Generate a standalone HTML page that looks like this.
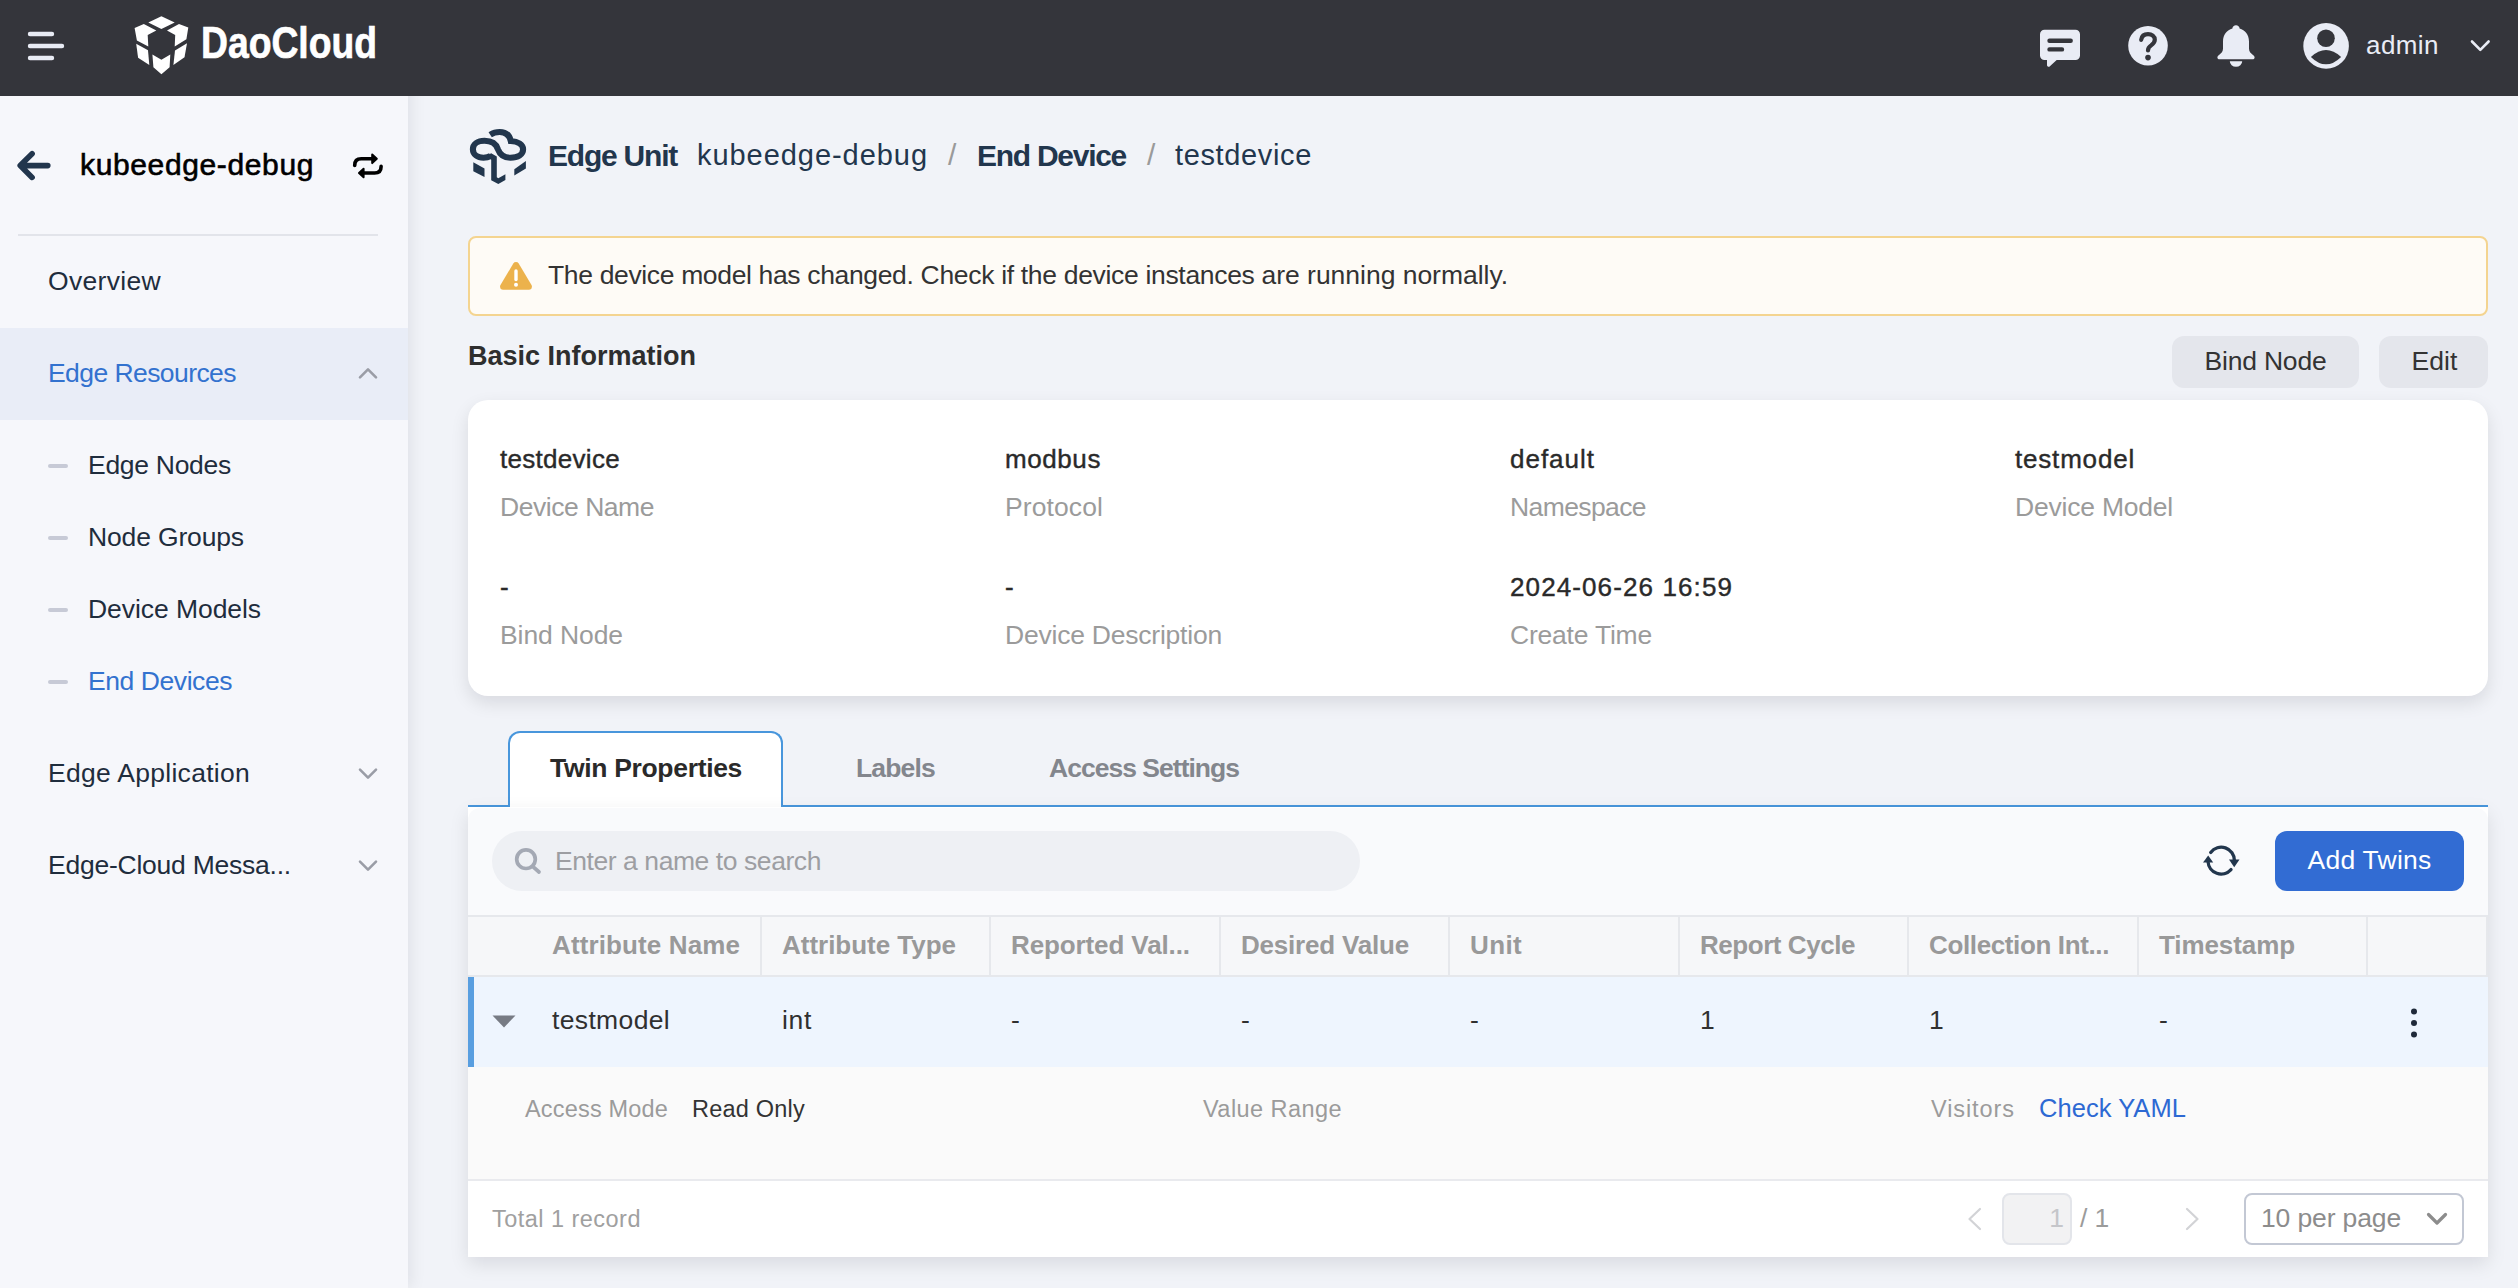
<!DOCTYPE html>
<html lang="en"><head><meta charset="utf-8"><title>End Device - testdevice</title>
<style>
*{box-sizing:border-box;margin:0;padding:0}
html,body{width:2518px;height:1288px}
body{overflow:hidden}
body{background:#f1f3f8;font-family:"Liberation Sans",sans-serif;color:#333;position:relative}
.t{position:absolute;white-space:pre;line-height:1;display:block;color:inherit;margin:0;padding:0;border:0;background:none;font-family:inherit;font-weight:400;text-decoration:none;text-align:left;cursor:default}
.abs{position:absolute}
header{position:absolute;left:0;top:0;width:2518px;height:96px;background:#34353b}
aside{position:absolute;left:0;top:0;width:408px;height:1288px;background:#f6f7fb;box-shadow:4px 0 14px rgba(20,20,30,.07)}
main{position:absolute;left:0;top:0;width:2518px;height:1288px}
svg{position:absolute;overflow:visible}
.btn{position:absolute;border-radius:12px;background:#e4e6ec}
.card{position:absolute;left:468px;top:400px;width:2020px;height:296px;background:#fff;border-radius:20px;box-shadow:0 7px 18px rgba(10,10,20,.105)}
.alert{position:absolute;left:468px;top:236px;width:2020px;height:80px;border:2px solid #f4d490;background:#fefbf6;border-radius:8px}
.panel{position:absolute;left:468px;top:807px;width:2020px;height:450px;background:#fff;box-shadow:0 7px 18px rgba(10,10,20,.10)}
.toolbar{position:absolute;left:468px;top:808px;width:2020px;height:108px;background:#f9fafc;border-radius:12px 12px 0 0}
.tabline{position:absolute;left:468px;top:805px;width:2020px;height:2px;background:#4896dc}
.tab{position:absolute;left:508px;top:731px;width:275px;height:76px;background:#fff;border:2px solid #4896dc;border-bottom:none;border-radius:12px 12px 0 0}
.search{position:absolute;left:492px;top:831px;width:868px;height:60px;border-radius:30px;background:#eef0f4}
.thead{position:absolute;left:468px;top:915px;width:2020px;height:62px;background:#f6f7f9;border-top:2px solid #e6e8ec;border-bottom:2px solid #e6e8ec}
.colsep{position:absolute;top:917px;width:2px;height:58px;background:#e6e8ec}
.row{position:absolute;left:468px;top:977px;width:2020px;height:90px;background:#eef5fe}
.rowbar{position:absolute;left:468px;top:977px;width:6px;height:90px;background:#589ee0}
.expand{position:absolute;left:468px;top:1067px;width:2020px;height:112px;background:#fafafa}
.foot{position:absolute;left:468px;top:1179px;width:2020px;height:78px;background:#fff;border-top:2px solid #e9eaee}
.pginput{position:absolute;left:2002px;top:1193px;width:70px;height:52px;border:2px solid #e3e5ea;border-radius:8px;background:#f2f2f3}
.pgsel{position:absolute;left:2244px;top:1193px;width:220px;height:52px;border:2px solid #c3c8d4;border-radius:8px;background:#fff}
.active{position:absolute;left:0;top:328px;width:408px;height:92px;background:#e9edf7}
.dash{position:absolute;left:48px;width:20px;height:4px;border-radius:2px;background:#c7cad6}
.divider{position:absolute;left:18px;top:234px;width:360px;height:2px;background:#e2e4ea}
</style></head>
<body>
<main>
<svg style="left:466px;top:126px" width="64" height="62" viewBox="466 126 64 62"><g fill="none" stroke="#22364d" stroke-width="6.100">
<path d="M490.200 134.700C493 132.900 496 132 499.700 132C505.500 132 509.500 135.400 510.800 141C518 141.500 523.100 144.500 523.100 149.300C523.100 154.500 518 157.700 510.500 157.700C503.500 157.700 499.600 154 497.800 149C496 143.600 491.500 140.800 484.500 140.800C477.500 140.800 472.900 144.300 472.900 149.300C472.900 154.500 477.500 157.700 483.500 157.700C486.400 157.700 488.600 157.100 490.600 156"/>
</g><g fill="#22364d"><polygon points="487.500,155.200 491.200,153.200 496.800,156.500 496.800,177.300 498.300,178.200 505.400,174.300 505.400,180.100 498.300,184.100 491.200,180.300 491.200,159.800"/><polygon points="473.300,162.300 484.500,168.600 484.500,176.900 473.300,171.200"/><polygon points="525.900,161 525.900,168.600 514.300,175.600 514.300,169.300"/></g></svg>
<strong class="t" style="top:141px;font-size:30px;left:548.0px;font-weight:700;color:#22364d;letter-spacing:-1.22px;">Edge Unit</strong><span class="t" style="top:141px;font-size:29px;left:697.0px;color:#22364d;letter-spacing:0.95px;">kubeedge-debug</span><span class="t" style="top:140px;font-size:30px;left:948.0px;color:#9a9a9a;">/</span><strong class="t" style="top:141px;font-size:30px;left:977.0px;font-weight:700;color:#22364d;letter-spacing:-1.27px;">End Device</strong><span class="t" style="top:140px;font-size:30px;left:1147.0px;color:#9a9a9a;">/</span><span class="t" style="top:141px;font-size:29px;left:1175.0px;color:#22364d;letter-spacing:0.64px;">testdevice</span>
<div class="alert"></div>
<svg style="left:498px;top:260px" width="36" height="32" viewBox="498 260 36 32"><path fill="#ecb24c" d="M513.300 263.600a3.200 3.200 0 0 1 5.400 0l12.800 21.400a3.200 3.200 0 0 1 -2.700 4.800h-25.600a3.200 3.200 0 0 1 -2.700 -4.800z"/><path d="M516 271v8.500" stroke="#fff" stroke-width="3.400" stroke-linecap="round"/><circle cx="516" cy="284.800" r="2" fill="#fff"/></svg>
<p class="abs" style="left:0;top:0"><span class="t" style="top:262px;font-size:26.5px;left:548.0px;letter-spacing:-0.35px;">The device model has changed. </span><span class="t" style="top:262px;font-size:26.5px;left:920.6px;letter-spacing:-0.32px;">Check if the device instances </span><span class="t" style="top:262px;font-size:26.5px;left:1261.5px;letter-spacing:-0.02px;">are running normally.</span></p>
<h2 class="t" style="top:343px;font-size:27px;left:468.0px;font-weight:700;color:#2e2e2e;">Basic Information</h2>
<div class="btn" style="left:2172px;top:336px;width:187px;height:52px"></div><button class="t" style="top:348px;font-size:26.5px;left:2204.5px;letter-spacing:-0.20px;">Bind Node</button>
<div class="btn" style="left:2379px;top:336px;width:109px;height:52px"></div><button class="t" style="top:348px;font-size:26.5px;left:2411.5px;letter-spacing:0.08px;">Edit</button>
<section class="card"></section>
<span class="t" style="top:446px;font-size:26px;left:500.0px;color:#2a2a2a;letter-spacing:0.29px;-webkit-text-stroke:0.4px currentColor;">testdevice</span><span class="t" style="top:446px;font-size:26px;left:1005.0px;color:#2a2a2a;letter-spacing:0.58px;-webkit-text-stroke:0.4px currentColor;">modbus</span><span class="t" style="top:446px;font-size:26px;left:1510.0px;color:#2a2a2a;letter-spacing:0.99px;-webkit-text-stroke:0.4px currentColor;">default</span><span class="t" style="top:446px;font-size:26px;left:2015.0px;color:#2a2a2a;letter-spacing:0.81px;-webkit-text-stroke:0.4px currentColor;">testmodel</span>
<span class="t" style="top:494px;font-size:26.5px;left:500.0px;color:#9b9b9b;letter-spacing:-0.46px;">Device Name</span><span class="t" style="top:494px;font-size:26.5px;left:1005.0px;color:#9b9b9b;letter-spacing:0.10px;">Protocol</span><span class="t" style="top:494px;font-size:26.5px;left:1510.0px;color:#9b9b9b;letter-spacing:-0.60px;">Namespace</span><span class="t" style="top:494px;font-size:26.5px;left:2015.0px;color:#9b9b9b;letter-spacing:-0.21px;">Device Model</span>
<span class="t" style="top:574px;font-size:26px;left:500.0px;color:#2a2a2a;-webkit-text-stroke:0.4px currentColor;">-</span><span class="t" style="top:574px;font-size:26px;left:1005.0px;color:#2a2a2a;-webkit-text-stroke:0.4px currentColor;">-</span><span class="t" style="top:574px;font-size:26px;left:1510.0px;color:#2a2a2a;letter-spacing:1.11px;-webkit-text-stroke:0.4px currentColor;">2024-06-26 16:59</span>
<span class="t" style="top:622px;font-size:26.5px;left:500.0px;color:#9b9b9b;letter-spacing:-0.09px;">Bind Node</span><span class="t" style="top:622px;font-size:26.5px;left:1005.0px;color:#9b9b9b;letter-spacing:-0.22px;">Device Description</span><span class="t" style="top:622px;font-size:26.5px;left:1510.0px;color:#9b9b9b;letter-spacing:-0.21px;">Create Time</span>
<div class="tabline"></div><div class="tab"></div>
<span class="t" style="top:755px;font-size:26.5px;left:550.0px;font-weight:700;color:#2a2a2a;letter-spacing:-0.32px;">Twin Properties</span><span class="t" style="top:755px;font-size:26.5px;left:856.0px;font-weight:700;color:#83868d;letter-spacing:-0.83px;">Labels</span><span class="t" style="top:755px;font-size:26.5px;left:1049.0px;font-weight:700;color:#83868d;letter-spacing:-0.98px;">Access Settings</span>
<section class="panel"></section><div class="toolbar"></div>
<div class="search"></div>
<svg style="left:512px;top:846px" width="32" height="32" viewBox="512 846 32 32"><g fill="none" stroke="#a4a9b4" stroke-width="3.700" stroke-linecap="round"><circle cx="526" cy="859.200" r="9.300"/><path d="M533.200 866.800l5.800 5.200"/></g></svg>
<span class="t" style="top:848px;font-size:26.5px;left:555.0px;color:#9d9ea2;letter-spacing:-0.43px;">Enter a name to search</span>
<svg style="left:2200px;top:840px" width="44" height="44" viewBox="2200 840 44 44"><g fill="none" stroke="#22364d" stroke-width="3.300" stroke-linecap="round"><path d="M2210.700 852.400A13.200 13.200 0 0 1 2234.400 860.500"/><path d="M2231 869.600A13.200 13.200 0 0 1 2208 861.500"/></g><g fill="#22364d"><polygon points="2229,859.600 2239.500,859.600 2234.200,867.200"/><polygon points="2203,862.600 2213.200,862.600 2208.200,855.600"/></g></svg>
<div class="btn" style="left:2275px;top:831px;width:189px;height:60px;background:#326cd3"></div><button class="t" style="top:847px;font-size:26.5px;left:2307.5px;color:#fff;letter-spacing:0.25px;">Add Twins</button>
<div class="thead"></div>
<div class="colsep" style="left:760px"></div><div class="colsep" style="left:989px"></div><div class="colsep" style="left:1219px"></div><div class="colsep" style="left:1448px"></div><div class="colsep" style="left:1678px"></div><div class="colsep" style="left:1907px"></div><div class="colsep" style="left:2137px"></div><div class="colsep" style="left:2366px"></div><div class="colsep" style="left:2486px"></div>
<span class="t" style="top:932px;font-size:26px;left:552.0px;font-weight:700;color:#999;letter-spacing:0.12px;">Attribute Name</span><span class="t" style="top:932px;font-size:26px;left:782.0px;font-weight:700;color:#999;letter-spacing:-0.02px;">Attribute Type</span><span class="t" style="top:932px;font-size:26px;left:1011.0px;font-weight:700;color:#999;letter-spacing:-0.11px;">Reported Val...</span><span class="t" style="top:932px;font-size:26px;left:1241.0px;font-weight:700;color:#999;letter-spacing:-0.20px;">Desired Value</span><span class="t" style="top:932px;font-size:26px;left:1470.0px;font-weight:700;color:#999;letter-spacing:0.36px;">Unit</span><span class="t" style="top:932px;font-size:26px;left:1700.0px;font-weight:700;color:#999;letter-spacing:-0.45px;">Report Cycle</span><span class="t" style="top:932px;font-size:26px;left:1929.0px;font-weight:700;color:#999;letter-spacing:-0.37px;">Collection Int...</span><span class="t" style="top:932px;font-size:26px;left:2159.0px;font-weight:700;color:#999;letter-spacing:-0.09px;">Timestamp</span>
<div class="row"></div><div class="rowbar"></div>
<svg style="left:490px;top:1012px" width="28" height="18" viewBox="490 1012 28 18"><polygon points="492.500,1015.500 515.500,1015.500 504,1027.500" fill="#777b84"/></svg>
<span class="t" style="top:1007px;font-size:26.5px;left:552.0px;color:#303030;letter-spacing:0.35px;">testmodel</span><span class="t" style="top:1007px;font-size:26.5px;left:782.0px;color:#303030;letter-spacing:0.67px;">int</span><span class="t" style="top:1007px;font-size:26.5px;left:1011.0px;color:#303030;">-</span><span class="t" style="top:1007px;font-size:26.5px;left:1241.0px;color:#303030;">-</span><span class="t" style="top:1007px;font-size:26.5px;left:1470.0px;color:#303030;">-</span><span class="t" style="top:1007px;font-size:26.5px;left:1700.0px;color:#303030;">1</span><span class="t" style="top:1007px;font-size:26.5px;left:1929.0px;color:#303030;">1</span><span class="t" style="top:1007px;font-size:26.5px;left:2159.0px;color:#303030;">-</span>
<svg style="left:2408px;top:1006px" width="12" height="34" viewBox="2408 1006 12 34"><g fill="#1f2a3a"><circle cx="2414" cy="1011.500" r="3"/><circle cx="2414" cy="1023" r="3"/><circle cx="2414" cy="1034.500" r="3"/></g></svg>
<div class="expand"></div>
<span class="t" style="top:1098px;font-size:23.5px;left:525.0px;color:#9b9b9b;letter-spacing:0.18px;">Access Mode</span><span class="t" style="top:1098px;font-size:23.5px;left:692.0px;letter-spacing:0.22px;">Read Only</span><span class="t" style="top:1098px;font-size:23.5px;left:1203.0px;color:#9b9b9b;letter-spacing:0.44px;">Value Range</span><span class="t" style="top:1098px;font-size:23.5px;left:1931.0px;color:#9b9b9b;letter-spacing:0.92px;">Visitors</span><a class="t" style="top:1096px;font-size:25.5px;left:2039.0px;color:#2d69d3;letter-spacing:0.05px;">Check YAML</a>
<div class="foot"></div>
<span class="t" style="top:1208px;font-size:23.5px;left:492.0px;color:#a0a0a0;letter-spacing:0.47px;">Total 1 record</span>
<svg style="left:1962px;top:1206px" width="24" height="26" viewBox="1962 1206 24 26"><path d="M1980 1209l-10.500 10 10.500 10" fill="none" stroke="#d2d3d6" stroke-width="2.200" stroke-linecap="round" stroke-linejoin="round"/></svg>
<div class="pginput"></div><span class="t" style="top:1205px;font-size:26.5px;right:454.0px;color:#c5c6ca;">1</span><span class="t" style="top:1205px;font-size:26.5px;left:2080.0px;color:#9b9b9b;letter-spacing:-0.16px;">/ 1</span>
<svg style="left:2180px;top:1206px" width="24" height="26" viewBox="2180 1206 24 26"><path d="M2187 1209l10.500 10 -10.500 10" fill="none" stroke="#d2d3d6" stroke-width="2.200" stroke-linecap="round" stroke-linejoin="round"/></svg>
<div class="pgsel"></div><span class="t" style="top:1205px;font-size:26.5px;left:2261.0px;color:#8c8c8c;letter-spacing:-0.13px;">10 per page</span>
<svg style="left:2424px;top:1210px" width="26" height="18" viewBox="2424 1210 26 18"><path d="M2428.500 1214.500l8.500 8.500 8.500 -8.500" fill="none" stroke="#8c8c8c" stroke-width="3.200" stroke-linecap="round" stroke-linejoin="round"/></svg>
</main>
<aside><nav>
<svg style="left:14px;top:146px" width="40" height="40" viewBox="14 146 40 40"><path d="M47.800 165.600H20.500M32.100 153.800l-11.900 11.800 11.900 11.800" fill="none" stroke="#22364d" stroke-width="5.600" stroke-linecap="round" stroke-linejoin="round"/></svg>
<div class="t" style="top:150px;font-size:30px;left:80.0px;color:#000;letter-spacing:0.63px;-webkit-text-stroke:0.6px currentColor;">kubeedge-debug</div>
<svg style="left:350px;top:150px" width="36" height="32" viewBox="350 150 36 32"><g fill="none" stroke="#000" stroke-width="3.600" stroke-linecap="round" stroke-linejoin="round"><path d="M354.700 165.400C354.700 160.600 357 158.800 361.200 158.800H372"/><path d="M381.100 166.400C381.100 171.200 378.800 173 374.600 173H364"/></g><g fill="#000" stroke="#000" stroke-width="2" stroke-linejoin="round"><polygon points="372.200,154.500 376.800,158.800 372.200,163.100"/><polygon points="363.600,168.700 359,173 363.600,177.300"/></g></svg>
<div class="divider"></div>
<a class="t" style="top:268px;font-size:26.5px;left:48.0px;color:#1f2d3d;letter-spacing:0.32px;">Overview</a>
<div class="active"></div>
<a class="t" style="top:360px;font-size:26.5px;left:48.0px;color:#3372cf;letter-spacing:-0.57px;">Edge Resources</a><svg style="left:356px;top:363px" width="24" height="20" viewBox="356 363 24 20"><path d="M360 377.3l8 -8 8 8" fill="none" stroke="#9a9da6" stroke-width="2.600" stroke-linecap="round" stroke-linejoin="round"/></svg>
<div class="dash" style="top:464px"></div><a class="t" style="top:452px;font-size:26.5px;left:88.0px;color:#1f2d3d;letter-spacing:-0.29px;">Edge Nodes</a>
<div class="dash" style="top:536px"></div><a class="t" style="top:524px;font-size:26.5px;left:88.0px;color:#1f2d3d;letter-spacing:-0.15px;">Node Groups</a>
<div class="dash" style="top:608px"></div><a class="t" style="top:596px;font-size:26.5px;left:88.0px;color:#1f2d3d;letter-spacing:-0.06px;">Device Models</a>
<div class="dash" style="top:680px"></div><a class="t" style="top:668px;font-size:26.5px;left:88.0px;color:#3372cf;letter-spacing:-0.43px;">End Devices</a>
<a class="t" style="top:760px;font-size:26.5px;left:48.0px;color:#1f2d3d;letter-spacing:0.29px;">Edge Application</a><svg style="left:356px;top:764px" width="24" height="20" viewBox="356 764 24 20"><path d="M360 769.7l8 8 8 -8" fill="none" stroke="#9a9da6" stroke-width="2.600" stroke-linecap="round" stroke-linejoin="round"/></svg>
<a class="t" style="top:852px;font-size:26.5px;left:48.0px;color:#1f2d3d;letter-spacing:-0.24px;">Edge-Cloud Messa...</a><svg style="left:356px;top:856px" width="24" height="20" viewBox="356 856 24 20"><path d="M360 861.7l8 8 8 -8" fill="none" stroke="#9a9da6" stroke-width="2.600" stroke-linecap="round" stroke-linejoin="round"/></svg>
</nav></aside>
<header>
<svg style="left:26px;top:30px" width="42" height="32" viewBox="26 30 42 32"><g stroke="#e9ecf5" stroke-width="4.4" stroke-linecap="round"><path d="M30 34H52M30 46H62M30 58H52"/></g></svg>
<svg style="left:130px;top:12px" width="64" height="68" viewBox="130 12 64 68"><g fill="#fff">
<polygon points="161.400,16.300 174.700,22.600 161.400,29 148.300,22.600"/>
<polygon points="134.600,27.900 143.800,24.100 156.300,30.500 147.700,34.900 148.300,46.400 136.900,40.400"/>
<polygon points="188.300,27.500 179,24.100 167,30.500 175.200,34.900 174.700,46.400 186.400,39.200"/>
<polygon points="136.200,43.800 148,50.200 149.300,65.100 138.100,57.800"/>
<polygon points="187,43.200 175,50.600 173.400,65.100 184.500,57.200"/>
<polygon points="152.400,54.600 161.400,59.700 170.300,54.600 169.600,67.300 161.400,74.300 153.400,67.300"/>
</g></svg>
<div class="t" style="top:20px;font-size:45px;left:201.0px;font-weight:700;color:#fff;transform:scaleX(0.8283);transform-origin:0 0;-webkit-text-stroke:0.7px currentColor;">DaoCloud</div>
<svg style="left:2036px;top:26px" width="48" height="44" viewBox="2036 26 48 44"><path fill="#e9ecf5" d="M2044.500 29.800h31a4.500 4.500 0 0 1 4.500 4.500v21.300a4.500 4.500 0 0 1 -4.500 4.500h-18.800l-6.800 6.200a1.700 1.700 0 0 1 -2.900 -1.200v-5h-2.500a4.500 4.500 0 0 1 -4.500 -4.500v-21.300a4.500 4.500 0 0 1 4.500 -4.500z"/><path d="M2049.500 40.700H2070.700M2049.500 49.400H2062" stroke="#34353b" stroke-width="4.400" stroke-linecap="round"/></svg>
<svg style="left:2126px;top:24px" width="44" height="44" viewBox="2126 24 44 44"><circle cx="2148" cy="45.700" r="19.800" fill="#e9ecf5"/><path d="M2141.200 39.800c.500 -3.600 3.200 -5.600 6.800 -5.600 3.800 0 6.800 2.200 6.800 5.600 0 2.800 -1.800 4.200 -3.700 5.600 -2 1.400 -3.100 2.600 -3.100 5" fill="none" stroke="#34353b" stroke-width="4.200" stroke-linecap="round"/><circle cx="2148" cy="57.600" r="2.800" fill="#34353b"/></svg>
<svg style="left:2214px;top:22px" width="44" height="48" viewBox="2214 22 44 48"><path fill="#e9ecf5" d="M2236 25.300C2238 25.300 2239.400 26.600 2239.600 28.400C2245 30 2249 34.600 2249 41.500V48.500C2249 51.500 2250.500 53 2253 55C2254.500 56.200 2254.600 57 2254.600 57.400C2254.600 58.500 2253.800 59.200 2252.600 59.200H2219.400C2218.200 59.200 2217.400 58.500 2217.400 57.400C2217.400 57 2217.500 56.200 2219 55C2221.500 53 2223 51.500 2223 48.500V41.500C2223 34.600 2227 30 2232.400 28.400C2232.600 26.600 2234 25.300 2236 25.300zM2229.800 61.200H2242.200A6.200 5.600 0 0 1 2229.800 61.200z"/></svg>
<svg style="left:2300px;top:20px" width="52" height="52" viewBox="2300 20 52 52"><circle cx="2326.100" cy="45.900" r="22.800" fill="#e9ecf5"/><circle cx="2326" cy="38.200" r="8.800" fill="#34353b"/><path d="M2310.900 56.900Q2326 43.100 2341.100 56.900Q2326 71.700 2310.900 56.900z" fill="#34353b"/></svg>
<div class="t" style="top:32px;font-size:26px;left:2366.0px;color:#e9ecf5;letter-spacing:0.43px;">admin</div>
<svg style="left:2468px;top:38px" width="24" height="16" viewBox="2468 38 24 16"><path d="M2472 41.500l8.300 8.300 8.300-8.300" fill="none" stroke="#e9ecf5" stroke-width="2.600" stroke-linecap="round" stroke-linejoin="round"/></svg>
</header>

</body></html>
